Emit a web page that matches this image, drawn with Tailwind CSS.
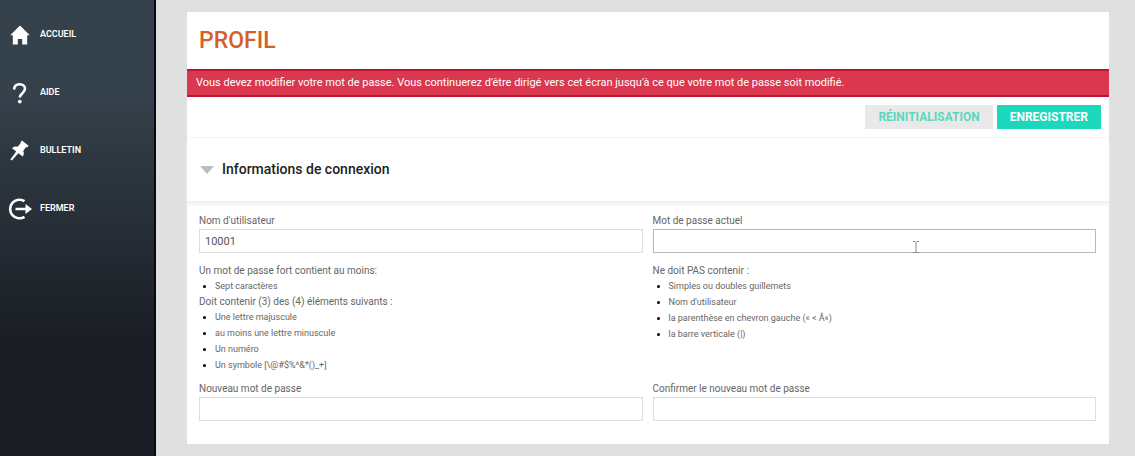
<!DOCTYPE html>
<html lang="fr">
  <head>
    <meta charset="UTF-8" />
    <meta name="viewport" content="width=device-width, initial-scale=1.0" />
    <title>Profil</title>
    <script src="https://cdn.jsdelivr.net/npm/@tailwindcss/browser@4"></script>
  </head>
  <body class="font-[Roboto,sans-serif]">
    <div class="flex min-h-screen bg-[#e0e0e0]">
      <nav
        class="w-[156px] shrink-0 border-r-2 border-[#060a12] bg-linear-to-b from-[#35414b] from-20% to-[#1a1e24] to-75% pt-1.5 text-[9px] font-semibold text-white"
      >
        <a href="#" class="flex h-[58px] items-center gap-2 pl-2">
          <svg class="size-6" viewBox="0 0 24 24" fill="currentColor">
            <path d="M12 2.5 2.2 12.2h2.6V21.5h5v-5.6h4.4v5.6h5v-9.3h2.6z" />
          </svg>
          ACCUEIL
        </a>
        <a href="#" class="flex h-[58px] items-center gap-2 pl-2">
          <svg class="size-6" viewBox="0 0 24 24" fill="none" stroke="currentColor" stroke-width="2.6">
            <path d="M6.2 8.4C6.2 5 8.4 3.2 11.6 3.2c3.2 0 5.4 1.900 5.4 4.600 0 4.200-5.200 4.500-5.200 8.700" />
            <circle cx="11.800" cy="20.600" r="1.900" fill="currentColor" stroke="none" />
          </svg>
          AIDE
        </a>
        <a href="#" class="flex h-[58px] items-center gap-2 pl-2">
          <svg class="size-6" viewBox="0 0 24 24" fill="currentColor">
            <path d="M14 1.600 20.600 6.800l-1.300 1.700-1.200-.4-2.900 4c1 2 .8 3.900-.5 5.500l-4.300-3.400-6.600 7.400-1.400-1.100 5.800-7.900-4.200-3.300c1.500-1.700 3.500-2.200 5.600-1.500l3.200-3.700-.2-1.100z" />
          </svg>
          BULLETIN
        </a>
        <a href="#" class="flex h-[58px] items-center gap-2 pl-2">
          <svg class="size-6" viewBox="0 0 24 24" fill="none" stroke="currentColor" stroke-width="2.600">
            <path d="M16.500 4.200A9.300 9.300 0 1 0 16.500 19.800M7.500 12H19" />
            <path d="M17.500 7 24 12l-6.500 5z" fill="currentColor" stroke="none" />
          </svg>
          FERMER
        </a>
      </nav>

      <main class="flex flex-1 flex-col py-3 pr-[26px] pl-[31px]">
        <div class="flex-1 bg-white">
          <h1 class="px-3 pt-[13px] pb-3 text-[23px] leading-8 font-medium text-[#d2622a]">PROFIL</h1>
          <p
            class="border-y-2 border-[#bf1238] bg-[#d9384f] px-[9px] text-[11px] leading-6 text-white"
            role="alert"
          >
            Vous devez modifier votre mot de passe. Vous continuerez d'être dirigé vers cet écran jusqu'à ce que votre mot de passe soit modifié.
          </p>

          <form>
            <div class="flex justify-end gap-1 border-b border-[#f3f3f3] px-2 py-2 text-[12px] leading-6 font-bold">
              <button type="reset" class="bg-[#e9e9e9] px-[13px] text-[#5cd6bd]">RÉINITIALISATION</button>
              <button type="submit" class="bg-[#1bd8bd] px-[13px] text-white">ENREGISTRER</button>
            </div>

            <h2 class="h-16 border-b border-[#ededed] shadow-[0_3px_4px_#f2f2f2]">
              <button type="button" class="flex h-full items-center gap-2 px-[13px] text-[14px] font-medium text-[#222]">
                <svg class="h-2 w-[14px]" viewBox="0 0 14 8" fill="#bdbdbd">
                  <path d="M0 0h14L7 8z" />
                </svg>
                Informations de connexion
              </button>
            </h2>

            <div class="grid grid-cols-2 gap-x-[10px] gap-y-2 pt-[11px] pr-[13px] pb-5 pl-3 text-[10px] text-[#666]">
              <div>
                <label for="username" class="block leading-4">Nom d'utilisateur</label>
                <input
                  id="username"
                  type="text"
                  value="10001"
                  class="h-6 w-full border border-[#dedede] px-[5px] text-[11px] text-[#555]"
                />
              </div>
              <div>
                <label for="current" class="block leading-4">Mot de passe actuel</label>
                <div class="relative">
                  <input
                    id="current"
                    type="password"
                    class="h-6 w-full border border-[#b8b8b8] px-[5px]"
                  />
                  <svg class="absolute top-[10px] left-[58%] h-4 w-3" viewBox="0 0 12 16" fill="none" stroke="#888">
                    <path d="M3 2.500h2l1 1 1-1h2M6 3.500v10M3 13.500h6" />
                  </svg>
                </div>
              </div>
              <div class="pt-0.5">
                <p class="leading-[15px]">Un mot de passe fort contient au moins:</p>
                <ul class="list-disc pl-4 text-[9px] leading-4 marker:text-black">
                  <li>Sept caractères</li>
                </ul>
                <p class="leading-[15px]">Doit contenir (3) des (4) éléments suivants :</p>
                <ul class="list-disc pl-4 text-[9px] leading-4 marker:text-black">
                  <li>Une lettre majuscule</li>
                  <li>au moins une lettre minuscule</li>
                  <li>Un numéro</li>
                  <li>Un symbole [\@#$%^&amp;*()_+]</li>
                </ul>
              </div>
              <div class="pt-0.5">
                <p class="leading-[15px]">Ne doit PAS contenir :</p>
                <ul class="list-disc pl-4 text-[9px] leading-4 marker:text-black">
                  <li>Simples ou doubles guillemets</li>
                  <li>Nom d'utilisateur</li>
                  <li>la parenthèse en chevron gauche (« &lt; Â«)</li>
                  <li>la barre verticale (|)</li>
                </ul>
              </div>
              <div>
                <label for="new" class="block leading-4">Nouveau mot de passe</label>
                <input id="new" type="password" class="h-6 w-full border border-[#dedede] px-[5px]" />
              </div>
              <div>
                <label for="confirm" class="block leading-4">Confirmer le nouveau mot de passe</label>
                <input id="confirm" type="password" class="h-6 w-full border border-[#dedede] px-[5px]" />
              </div>
            </div>
          </form>
        </div>
      </main>
    </div>
  </body>
</html>
